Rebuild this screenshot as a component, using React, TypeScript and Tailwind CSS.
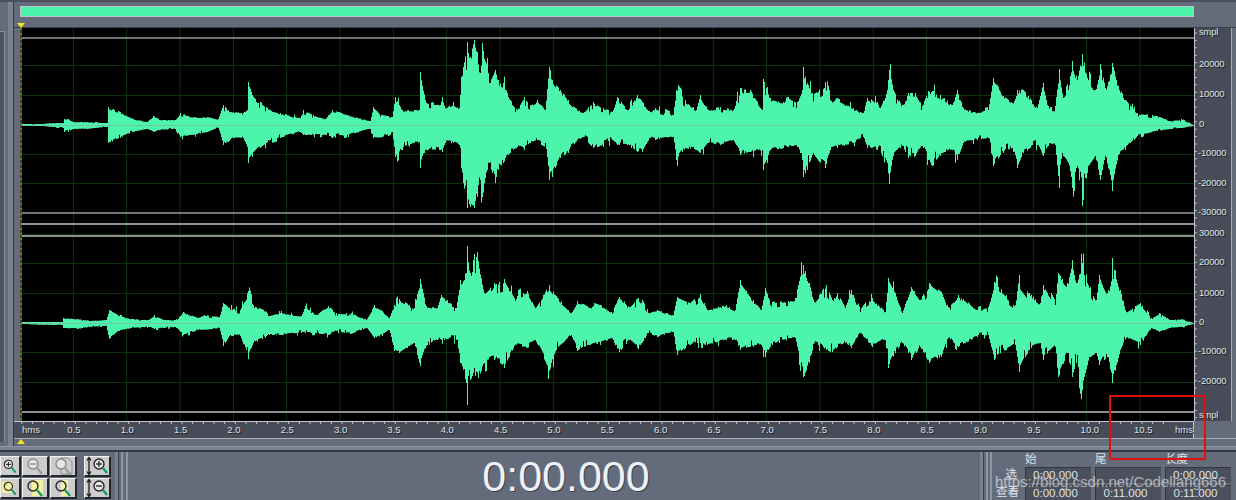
import React from 'react';

type Knot = [number, number, number];

const topWave: Knot[] = [
  [22,1,1],[40,1,1],[53,2,2],[63,2,3],[64,6,7],[68,6,7],[73,3,4],[87,3,4],[105,2,2],[107,2,2],[108,18,18],[120,13,13],[133,6,7],[147,3,4],[153,9,7],[160,5,5],[175,5,4],[180,12,12],[193,8,10],[207,8,7],[218,6,3],[223,20,20],[228,15,17],[233,13,13],[243,12,13],[247,15,22],[248,43,38],[252,30,32],[260,23,23],[270,15,15],[280,12,13],[300,7,7],[303,15,10],[313,10,10],[325,6,10],[332,15,13],[347,10,10],[370,4,4],[373,18,13],[382,10,12],[392,8,7],[395,28,32],[402,15,25],[419,15,17],[420,53,43],[425,25,25],[440,20,25],[442,28,27],[445,17,18],[453,23,18],[459,17,20],[461,48,43],[463,58,58],[467,83,83],[470,68,82],[474,85,83],[477,73,72],[480,52,55],[482,82,72],[487,67,45],[489,42,38],[495,55,58],[498,45,45],[503,42,38],[510,25,28],[517,15,22],[524,28,25],[530,20,18],[537,25,15],[545,15,18],[549,58,55],[552,45,52],[560,35,33],[568,25,28],[570,20,22],[583,12,12],[593,23,23],[603,17,22],[612,13,15],[617,28,20],[627,15,20],[637,30,27],[642,23,27],[650,13,13],[655,17,15],[673,10,12],[676,35,35],[685,25,23],[696,15,25],[700,30,28],[708,15,18],[720,18,20],[733,15,15],[740,37,30],[750,35,27],[762,15,25],[763,46,45],[767,38,38],[770,27,25],[783,23,23],[787,28,22],[797,23,22],[802,35,35],[803,58,52],[807,42,45],[812,32,30],[825,43,43],[830,25,25],[837,27,23],[853,17,18],[863,12,12],[867,27,23],[877,23,25],[880,17,21],[887,35,38],[889,55,59],[893,35,31],[902,20,21],[908,32,33],[915,32,31],[922,19,21],[928,34,35],[932,34,41],[940,30,31],[952,20,25],[957,35,35],[963,17,18],[977,12,15],[988,15,13],[993,47,41],[1003,29,28],[1012,22,23],[1017,35,43],[1023,35,28],[1037,17,20],[1043,42,31],[1048,19,21],[1055,19,20],[1059,56,63],[1063,27,31],[1068,35,38],[1072,64,63],[1077,45,41],[1082,71,81],[1088,45,41],[1095,35,31],[1100,61,55],[1105,37,31],[1112,62,66],[1118,39,30],[1125,25,25],[1137,12,11],[1157,9,6],[1170,4,4],[1182,5,3],[1193,0,1],
];

const bottomWave: Knot[] = [
  [22,1,1],[43,1,2],[62,1,2],[63,5,5],[77,4,6],[89,2,4],[106,3,3],[109,13,16],[119,7,8],[131,4,5],[148,3,4],[154,8,6],[164,3,5],[175,3,4],[183,11,12],[198,5,7],[204,8,7],[219,6,5],[223,20,23],[229,15,13],[240,13,13],[248,32,36],[253,18,20],[265,12,15],[269,7,12],[280,10,12],[301,7,10],[305,17,10],[315,8,10],[328,17,12],[336,10,8],[351,10,11],[366,3,5],[374,18,15],[382,12,13],[389,5,7],[394,18,28],[399,24,30],[414,15,20],[420,44,43],[426,17,23],[437,15,17],[441,28,17],[456,15,17],[460,43,40],[466,50,60],[467,77,82],[470,50,57],[473,63,50],[475,50,53],[478,62,55],[484,30,40],[494,40,37],[504,44,45],[514,25,23],[527,32,25],[535,15,17],[549,38,48],[556,27,27],[571,10,12],[577,22,28],[590,15,22],[594,20,20],[600,18,22],[611,11,15],[619,26,29],[629,16,17],[638,25,26],[648,10,10],[657,13,14],[673,8,9],[677,26,32],[690,20,22],[700,29,20],[707,13,22],[726,18,17],[735,13,17],[740,43,27],[753,23,24],[761,13,22],[765,35,34],[772,21,22],[795,25,15],[803,58,54],[809,40,40],[814,21,20],[826,38,27],[832,23,29],[837,30,24],[845,15,20],[851,33,25],[860,11,10],[872,25,24],[885,11,17],[888,45,45],[895,30,30],[902,10,20],[911,36,37],[920,23,24],[929,40,40],[941,31,34],[948,16,15],[958,28,24],[977,13,14],[988,16,12],[994,41,37],[1006,28,27],[1015,18,22],[1019,48,49],[1029,30,27],[1040,20,20],[1043,38,37],[1055,18,24],[1058,50,54],[1067,40,30],[1072,63,54],[1076,40,40],[1082,60,67],[1090,36,34],[1096,23,30],[1099,48,42],[1107,30,34],[1112,65,60],[1120,33,27],[1126,11,15],[1140,20,22],[1151,5,5],[1159,10,9],[1170,3,5],[1182,4,4],[1193,0,1],
];

// seeded noise: values hold for a pixel or two, with the odd spike and notch,
// so the outline looks like samples and not straight lines
function wavePath(knots: Knot[], center: number, seed: number) {
  let s = seed;
  const rnd = () => {
    s = (s * 16807) % 2147483647;
    return s / 2147483647;
  };
  const jitter = () => {
    const r = rnd();
    if (r < 0.05) return 1.22;
    if (r < 0.12) return 0.72;
    return 0.86 + rnd() * 0.16;
  };
  const ups: string[] = [];
  const downs: string[] = [];
  let j1 = 1;
  let j2 = 1;
  for (let i = 0; i < knots.length - 1; i++) {
    const [x0, u0, d0] = knots[i];
    const [x1, u1, d1] = knots[i + 1];
    for (let x = x0; x < x1; x++) {
      const t = (x - x0) / (x1 - x0);
      if (rnd() < 0.6) j1 = jitter();
      if (rnd() < 0.6) j2 = jitter();
      const up = x === x0 ? u0 : (u0 + (u1 - u0) * t) * j1;
      const dn = x === x0 ? d0 : (d0 + (d1 - d0) * t) * j2;
      ups.push(`L${x} ${(center - up).toFixed(1)}L${x + 1} ${(center - up).toFixed(1)}`);
      downs.unshift(`L${x + 1} ${(center + dn).toFixed(1)}L${x} ${(center + dn).toFixed(1)}`);
    }
  }
  return `M22 ${center}${ups.join('')}${downs.join('')}Z`;
}

const timeX = (n: number) => 20 + 53.33 * n;
const halfSeconds = Array.from({ length: 21 }, (_, i) => i + 1);

function Channel({ top, height, center, knots, seed, grid, lines }: { top: number; height: number; center: number; knots: Knot[]; seed: number; grid: number[]; lines: [number, string][] }) {
  return (
    <svg width={1172} height={height} viewBox={`22 ${top} 1172 ${height}`} className="block bg-black">
      {halfSeconds.map((n) => (
        <line key={n} x1={timeX(n)} x2={timeX(n)} y1={top} y2={top + height} stroke="#0c300c" />
      ))}
      {grid.map((y) => (
        <line key={y} x1={22} x2={1194} y1={y + 0.5} y2={y + 0.5} stroke="#0c300c" />
      ))}
      <path d={wavePath(knots, center, seed)} fill="#4cf5ab" />
      <line x1={22} x2={1194} y1={center + 0.5} y2={center + 0.5} stroke="#74c4a4" />
      {lines.map(([y, c]) => (
        <line key={y} x1={22} x2={1194} y1={y + 1} y2={y + 1} stroke={c} strokeWidth={1.500} />
      ))}
    </svg>
  );
}

const axisText = 'absolute font-["Liberation_Sans",sans-serif] text-[9.5px] leading-none text-[#dfe3e8] [text-shadow:1px_1px_0_#1b1e26] whitespace-nowrap';

const sampleLabels: [string, number][] = [
  ['smpl', 32], ['20000', 64], ['10000', 94], ['0', 124], ['-10000', 153], ['-20000', 183], ['-30000', 212],
  ['30000', 233], ['20000', 262], ['10000', 293], ['0', 322], ['-10000', 351], ['-20000', 381], ['smpl', 415],
];

function SampleRuler() {
  const ticks = Array.from({ length: 53 }, (_, i) => 5 + i * 7.4);
  return (
    <div className="relative w-[37px] h-[393px] bg-[#474c58] border-l border-[#c4c8cc]">
      <svg width={6} height={393} className="absolute left-0 top-0">
        {ticks.map((y) => (
          <line key={y} x1={0} x2={2} y1={y} y2={y} stroke="#b8bcc2" />
        ))}
      </svg>
      {sampleLabels.map(([label, y], i) => (
        <span key={i} style={{ top: y - 28 - 5 }} className={`${axisText} tracking-[-0.2px] ${label.startsWith('-') ? 'left-[3px]' : 'left-[4px]'}`}>
          {label}
        </span>
      ))}
    </div>
  );
}

function TimeRuler() {
  const ticks = Array.from({ length: 108 }, (_, i) => 8 + i * 10.667);
  return (
    <div className="relative h-[17px] w-[1180px] bg-[#474c58] border-r border-[#c4c8cc]">
      <svg width={1180} height={5} className="absolute left-0 top-0">
        <line x1={0} x2={1180} y1={0.5} y2={0.5} stroke="#c8ccd0" />
        {ticks.map((x) => (
          <line key={x} x1={x} x2={x} y1={0} y2={3} stroke="#c8ccd0" />
        ))}
      </svg>
      <span className={`${axisText} left-[8px] top-[4px]`}>hms</span>
      {halfSeconds.map((n) => (
        <span key={n} style={{ left: timeX(n) - 14 - 6 }} className={`${axisText} top-[4px]`}>
          {(n / 2).toFixed(1)}
        </span>
      ))}
      <span className={`${axisText} left-[1161px] top-[4px]`}>hms</span>
    </div>
  );
}

function Mag({ sign, dim, arrows, page, yellow }: { sign?: '+' | '-'; dim?: boolean; arrows?: boolean; page?: boolean; yellow?: 'left' | 'right' | 'mid' }) {
  const ring = dim ? '#8a8a8a' : '#262626';
  const handle = dim ? '#9c9c9c' : '#109a72';
  return (
    <svg width={22} height={20} viewBox="0 0 22 20">
      {yellow === 'left' && <rect x={1} y={2} width={13} height={14} fill="#f4f2a0" />}
      {yellow === 'mid' && <rect x={8} y={2} width={11} height={16} fill="#f4f2a0" />}
      {yellow === 'right' && <rect x={9} y={2} width={7} height={16} fill="#f4f2a0" />}
      {page && <path d="M9 2h7l4 4v12H9z" fill="none" stroke="#8a8a8a" />}
      {arrows && <path d="M3 2v16M1 4.500l2-3 2 3M1 15.500l2 3 2-3" fill="none" stroke="#1e1e1e" strokeWidth={1.300} />}
      <circle cx={arrows ? 13 : 9} cy={8} r={5} fill={yellow ? 'none' : '#e6e6e6'} stroke={ring} strokeWidth={1.400} />
      <line x1={arrows ? 17 : 13} y1={12} x2={arrows ? 21 : 18} y2={arrows ? 17 : 18} stroke={handle} strokeWidth={2.400} />
      {sign && <line x1={arrows ? 10 : 6} x2={arrows ? 16 : 12} y1={8} y2={8} stroke={ring} strokeWidth={1.300} />}
      {sign === '+' && <line x1={arrows ? 13 : 9} x2={arrows ? 13 : 9} y1={5} y2={11} stroke={ring} strokeWidth={1.300} />}
    </svg>
  );
}

function ToolButton({ children, first }: { children: React.ReactNode; first?: boolean }) {
  return (
    <div className={`h-[21px] ${first ? 'w-[21px]' : 'w-[27px]'} flex items-center justify-center bg-[#cdcdcd] border-t border-l border-[#f2f2f2] border-r-2 border-b-2 border-r-[#23262c] border-b-[#23262c]`}>
      {children}
    </div>
  );
}

function Readout({ value }: { value?: string }) {
  return (
    <div className="h-[16px] bg-[#4b505c] border-t border-l border-[#33363f] text-center pr-[6px] font-['Liberation_Sans',sans-serif] text-[11.500px] leading-[15px] text-[#dfe3e8]">
      {value}
    </div>
  );
}

export default function App() {
  const cjk = "font-['Liberation_Sans','Noto_Sans_CJK_SC',sans-serif]";
  return (
    <div className="relative w-[1236px] h-[500px] overflow-hidden bg-[#646c7c]">
      <div className="h-[2px] bg-[#4a505c]" />

      <div className="flex h-[444px]">
        {/* left rail */}
        <div className="w-[14px] h-[444px] flex border-r border-[#33363f]">
          <div className="w-[8px] flex flex-col">
            <div className="h-[29px]" />
            <div className="w-[5px] h-[411px] bg-[#4c525e] border-t border-r border-[#8a909c]" />
          </div>
          <div className="w-[5px] bg-[#7a818f]" />
        </div>

        {/* overview + waveform */}
        <div className="flex-1">
          <div className="h-[25px] pt-[4px] pl-[6px]">
            <div className="w-[1174px] h-[11px] bg-[#4cf5ab] border border-[#c0c4cb]" />
            <div className="relative">
              <div className="absolute left-[-3px] top-[6px] w-0 h-0 border-l-[4px] border-r-[4px] border-t-[5px] border-l-transparent border-r-transparent border-t-[#f4e81c]" />
            </div>
          </div>
          <div className="h-[1px] bg-[#3a3e49]" />

          <div className="flex">
            <div className="w-[6px]" />
            <svg width={2} height={393} className="block bg-[#3c3f3a]">
              {Array.from({ length: 80 }, (_, i) => (
                <rect key={i} x={0} y={i * 5} width={2} height={2} fill="#7a7420" />
              ))}
            </svg>
            <div>
              <Channel top={28} height={195} center={125} knots={topWave} seed={4711} grid={[65, 95, 154, 183]} lines={[[37, '#9a9a9a'], [212, '#9a9a9a']]} />
              <div className="h-[2px] bg-[#8d929c]" />
              <Channel top={225} height={196} center={323} knots={bottomWave} seed={90210} grid={[234, 263, 293, 352, 382]} lines={[[235, '#bdbdbd'], [411, '#bdbdbd']]} />
            </div>
            <SampleRuler />
            <div className="w-[5px] border-l border-[#a6abb5]" />
          </div>

          <TimeRuler />
          <div className="w-[1222px] h-[1px] bg-[#aab0ba]" />
          <div className="relative">
            <div className="absolute left-[3px] top-0 w-0 h-0 border-l-[4px] border-r-[4px] border-b-[5px] border-l-transparent border-r-transparent border-b-[#f4e81c]" />
          </div>
        </div>
      </div>

      {/* separator above the transport row */}
      <div className="h-[4px] bg-[#7c8390] border-t border-[#8f96a3]" />
      <div className="h-[2px] bg-[#353842]" />

      <div className="flex h-[48px]">
        <div className="pt-[4px] flex gap-[7px] w-[115px]">
          <div className="flex flex-col gap-[1px]">
            <div className="flex gap-[1px]">
              <ToolButton first><Mag sign="+" /></ToolButton>
              <ToolButton><Mag sign="-" dim /></ToolButton>
              <ToolButton><Mag dim page /></ToolButton>
            </div>
            <div className="flex gap-[1px]">
              <ToolButton first><Mag yellow="left" /></ToolButton>
              <ToolButton><Mag yellow="mid" /></ToolButton>
              <ToolButton><Mag yellow="right" /></ToolButton>
            </div>
          </div>
          <div className="flex flex-col gap-[1px]">
            <ToolButton><Mag sign="+" arrows /></ToolButton>
            <ToolButton><Mag sign="-" arrows /></ToolButton>
          </div>
        </div>

        <div className="w-[4px] bg-[#7c8390] border-r border-[#3a3e49]" />
        <div className="ml-[2px] w-[7px] border-x-2 border-[#8f96a3]" />

        <div className="flex-1 pl-[24px] flex items-center justify-center font-['Liberation_Sans',sans-serif] text-[43px] leading-none text-[#eef1f4] [text-shadow:1px_1px_0_#3a3e49]">
          0:00.000
        </div>

        <div className="w-[4px] bg-[#7c8390] border-r border-[#3a3e49]" />
        <div className="ml-[2px] w-[6px] border-x-2 border-[#8f96a3]" />

        <div className={`w-[244px] shrink-0 grid grid-cols-[29px_66px_66px_66px] grid-rows-[15px_18px_15px] gap-x-[4px] ${cjk} text-[11.500px] text-[#dfe3e8]`}>
          <div />
          <div className="leading-[15px]">始</div>
          <div className="leading-[15px]">尾</div>
          <div className="leading-[15px]">长度</div>
          <div className="text-right leading-[15px] pr-[4px]">选</div>
          <Readout value="0:00.000" />
          <Readout />
          <Readout value="0:00.000" />
          <div className="text-right leading-[15px] whitespace-nowrap pr-[2px]">查看</div>
          <Readout value="0:00.000" />
          <Readout value="0:11.000" />
          <Readout value="0:11.000" />
        </div>
      </div>

      {/* annotation and watermark sit on top of the screenshot */}
      <div className="absolute left-[1109px] top-[395px] w-[97px] h-[65px] border-2 border-[#e01010]" />
      <div className="absolute left-[995px] top-[473px] font-['Liberation_Sans',sans-serif] text-[15px] leading-[18px] text-white/55 whitespace-nowrap">
        https://blog.csdn.net/Codeliang666
      </div>
    </div>
  );
}
